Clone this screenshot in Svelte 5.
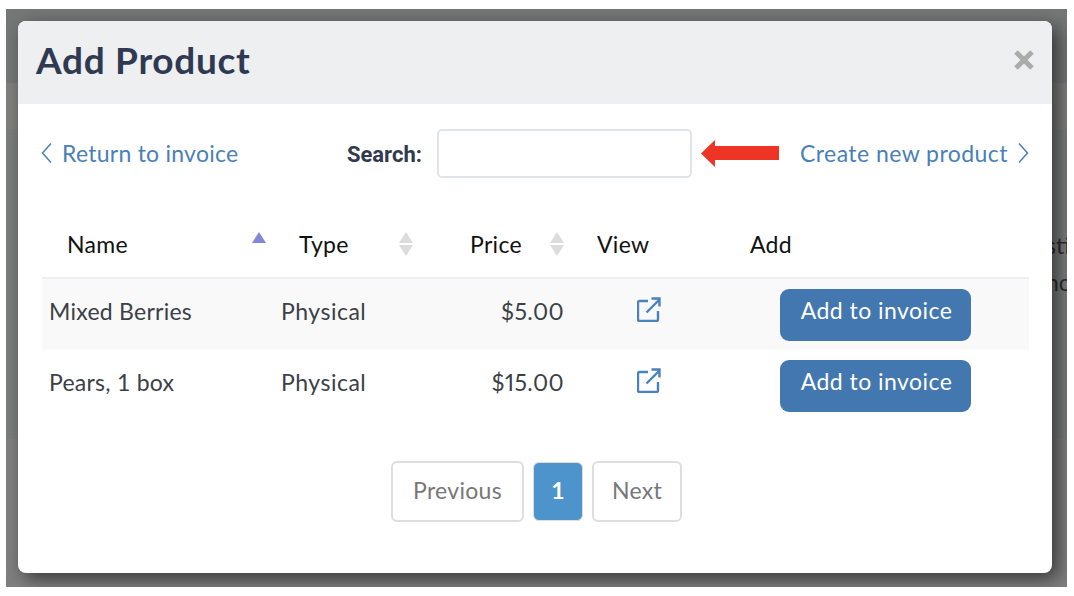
<script lang="ts">
  interface Product {
    name: string
    type: string
    price: string
  }

  const products: Product[] = [
    { name: 'Mixed Berries', type: 'Physical', price: '$5.00' },
    { name: 'Pears, 1 box', type: 'Physical', price: '$15.00' },
  ]
</script>

<div class="page">
  <div class="backdrop">
    <div class="behind">
      <span>sti</span>
      <span>nc</span>
    </div>

    <div class="modal">
      <header class="modal-head">
        <h1>Add Product</h1>
        <svg class="close" viewBox="0 0 22 22" aria-label="Close">
          <path d="M3 3l16 16M19 3L3 19" />
        </svg>
      </header>

      <div class="toolbar">
        <a class="link back" href="#back">
          <svg class="chev" viewBox="0 0 11 22"><path d="M10 1.500L1.500 11l8.500 9.500" /></svg>
          <span class="back-label">Return to invoice</span>
        </a>

        <label class="search">
          <span class="search-label">Search:</span>
          <input type="text" />
        </label>

        <svg class="arrow" viewBox="0 0 78 27"><path d="M0 13.500L14 0v6h64v14H14v7z" /></svg>

        <a class="link create" href="#new">
          <span>Create new product</span>
          <svg class="chev" viewBox="0 0 11 22"><path d="M1 1.500L9.500 11 1 20.500" /></svg>
        </a>
      </div>

      <table>
        <colgroup>
          <col class="c-name" />
          <col class="c-type" />
          <col class="c-price" />
          <col class="c-view" />
          <col class="c-add" />
        </colgroup>
        <thead>
          <tr>
            <th>
              Name
              <span class="sort"><i class="up on"></i></span>
            </th>
            <th>
              Type
              <span class="sort"><i class="up"></i><i class="down"></i></span>
            </th>
            <th class="th-price">
              Price
              <span class="sort"><i class="up"></i><i class="down"></i></span>
            </th>
            <th>View</th>
            <th>Add</th>
          </tr>
        </thead>
        <tbody>
          {#each products as p, i}
            <tr class:odd={i % 2 === 0}>
              <td>{p.name}</td>
              <td class="type">{p.type}</td>
              <td class="price">{p.price}</td>
              <td class="view">
                <svg class="ext" viewBox="0 0 24 25">
                  <path d="M11 4H2.500a1.500 1.500 0 0 0-1.500 1.500v17a1.500 1.500 0 0 0 1.500 1.500h17a1.500 1.500 0 0 0 1.500-1.500V14" />
                  <path d="M9.500 15.500L22.500 2.500M14.500 1.500h8v8" />
                </svg>
              </td>
              <td class="action"><button class="add">Add to invoice</button></td>
            </tr>
          {/each}
        </tbody>
      </table>

      <nav class="pager">
        <button class="pg prev">Previous</button>
        <button class="pg current">1</button>
        <button class="pg next">Next</button>
      </nav>
    </div>
  </div>
</div>

<style>
  :global(body) {
    margin: 0;
    background: #fff;
  }

  .page {
    width: 1074px;
    height: 596px;
    padding: 9px 7px 9px 6px;
    box-sizing: border-box;
    font-family: Lato, "Liberation Sans", sans-serif;
  }

  .backdrop {
    position: relative;
    height: 578px;
    padding: 12px 15px 14px 12px;
    box-sizing: border-box;
    overflow: hidden;
    background: linear-gradient(#757676 0 74px, #7f7f7e 74px 120px, #7b7c7c 120px 430px, #7f7f7f 430px);
  }

  .behind {
    position: absolute;
    left: 1040px;
    top: 224px;
    display: flex;
    flex-direction: column;
    gap: 12px;
    font-size: 23px;
    line-height: 25px;
    color: #2e2e2e;
    white-space: nowrap;
  }

  .modal {
    position: relative;
    height: 552px;
    border-radius: 8px;
    background: #fff;
    box-shadow: 6px 6px 18px rgba(0, 0, 0, 0.55);
  }

  .modal-head {
    display: flex;
    align-items: center;
    justify-content: space-between;
    height: 83px;
    padding: 0 17px 6px 18px;
    box-sizing: border-box;
    border-radius: 8px 8px 0 0;
    background: #eeeff1;
  }

  h1 {
    margin: 0;
    font-size: 37px;
    font-weight: 700;
    letter-spacing: 0.7px;
    color: #2f3a52;
  }

  .close {
    width: 22px;
    height: 22px;
    fill: none;
    stroke: #ababab;
    stroke-width: 5;
  }

  .toolbar {
    display: flex;
    align-items: center;
    height: 49px;
    margin-top: 25px;
    padding: 0 23px;
  }

  .link {
    display: flex;
    align-items: center;
    padding-bottom: 1px;
    color: #4a7fb8;
    font-size: 23px;
    text-decoration: none;
  }

  .back {
    letter-spacing: 0.25px;
  }

  .create {
    letter-spacing: 0.45px;
  }

  .chev {
    width: 11px;
    height: 22px;
    fill: none;
    stroke: #4a7fb8;
    stroke-width: 1.500;
  }

  .back-label {
    margin-left: 10px;
  }

  .create .chev {
    margin-left: 10px;
  }

  .search {
    display: flex;
    align-items: center;
    gap: 15px;
    margin-left: auto;
    font-family: Roboto, sans-serif;
    font-size: 22px;
    font-weight: 700;
    color: #323a4e;
  }

  .search-label {
    padding-top: 1px;
  }

  .search input {
    width: 255px;
    height: 49px;
    padding: 0;
    box-sizing: border-box;
    border: 2px solid #e2e5e8;
    border-radius: 5px;
    background: #fff;
  }

  .arrow {
    width: 78px;
    height: 27px;
    margin: 0 21px 0 9px;
    fill: #ee3424;
  }

  table {
    width: 987px;
    margin: 44px 0 0 24px;
    border-collapse: collapse;
    table-layout: fixed;
  }

  .c-name { width: 232px; }
  .c-type { width: 147px; }
  .c-price { width: 151px; }
  .c-view { width: 153px; }
  .c-add { width: 304px; }

  th {
    position: relative;
    height: 56px;
    padding: 0 0 11px 25px;
    box-sizing: border-box;
    border-bottom: 2px solid #eeeef3;
    text-align: left;
    font-size: 23px;
    font-weight: 400;
    letter-spacing: 0.3px;
    color: #111;
  }

  .th-price {
    padding-left: 49px;
  }

  .sort {
    position: absolute;
    top: 10px;
    right: 8px;
    display: flex;
    flex-direction: column;
    gap: 2px;
    width: 14px;
  }

  .sort i {
    display: block;
    width: 0;
    height: 0;
    border-left: 7px solid transparent;
    border-right: 7px solid transparent;
  }

  .sort .up {
    border-bottom: 11px solid #dcdcdc;
  }

  .sort .down {
    border-top: 11px solid #dcdcdc;
  }

  .sort .on {
    border-bottom-color: #8088d8;
  }

  td {
    height: 72px;
    padding: 0 0 8px 7px;
    box-sizing: border-box;
    font-size: 23px;
    letter-spacing: 0.25px;
    color: #3b4047;
  }

  tr.odd td {
    background: #f9f9f9;
  }

  .type {
    letter-spacing: 0.5px;
  }

  .price {
    padding: 0 8px 8px 0;
    text-align: right;
    font-feature-settings: "pnum";
    letter-spacing: 0.4px;
  }

  .view {
    padding: 0 0 15px;
    text-align: center;
  }

  .action {
    padding: 0 3px 0 0;
    text-align: center;
  }

  .ext {
    display: inline-block;
    width: 24px;
    height: 25px;
    vertical-align: middle;
    fill: none;
    stroke: #4a82bd;
    stroke-width: 2.400;
  }

  .add {
    width: 191px;
    height: 52px;
    padding: 0 0 10px 2px;
    border: 0;
    border-radius: 9px;
    background: #4377b0;
    color: #fff;
    font: inherit;
    font-size: 23px;
    letter-spacing: 0.45px;
  }

  .pager {
    display: flex;
    justify-content: center;
    align-items: center;
    gap: 9px;
    margin: 39px 0 0 3px;
  }

  .pg {
    height: 61px;
    padding: 0 0 4px;
    border: 2px solid #dedede;
    border-radius: 6px;
    background: #fff;
    color: #777;
    font: inherit;
    font-size: 23px;
    letter-spacing: 0.3px;
  }

  .prev { width: 133px; }
  .next { width: 90px; }

  .current {
    width: 50px;
    height: 59px;
    border-width: 1px;
    background: #4d94cd;
    color: #fff;
    font-weight: 700;
  }
</style>
